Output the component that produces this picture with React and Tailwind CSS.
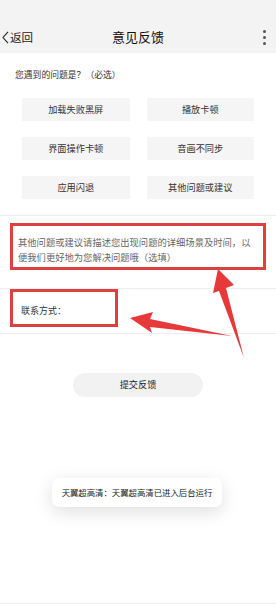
import React from "react";

const font = { fontFamily: '"Noto Sans CJK SC", "Noto Sans", sans-serif' };

export default function App() {
  const items = ["加载失败黑屏", "播放卡顿", "界面操作卡顿", "音画不同步", "应用闪退", "其他问题或建议"];
  return (
    <div className="relative w-[276px] h-[604px] bg-white overflow-hidden flex flex-col" style={font}>
      {/* header */}
      <div className="h-[53px] bg-[#f3f3f3] pt-[20px] shrink-0">
        <div className="h-[34px] grid grid-cols-[1fr_auto_1fr] items-center">
          <div className="flex items-center pl-[2px]">
            <svg width="7" height="13" viewBox="0 0 7 13" className="mr-[1px]">
              <polyline points="6,0.8 1,6.5 6,12.2" fill="none" stroke="#222" strokeWidth="1.1" />
            </svg>
            <span className="text-[11.5px] leading-[14px] text-[#222]">返回</span>
          </div>
          <div className="text-[13px] leading-[16px] text-[#111]">意见反馈</div>
          <div className="flex justify-end pr-[10px]">
            <div className="flex flex-col gap-[3px]">
              <span className="block w-[3px] h-[3px] rounded-full bg-[#555]" />
              <span className="block w-[3px] h-[3px] rounded-full bg-[#555]" />
              <span className="block w-[3px] h-[3px] rounded-full bg-[#555]" />
            </div>
          </div>
        </div>
      </div>

      {/* question */}
      <div className="pt-[15px] pl-[15px] text-[8.8px] leading-[14px] text-[#333]">您遇到的问题是？（必选）</div>
      <div className="mt-[16px] ml-[22px] w-[232px] grid grid-cols-2 gap-x-[17px] gap-y-[16px]">
        {items.map((t) => (
          <div key={t} className="h-[23px] bg-[#f5f5f5] flex items-center justify-center text-[9.2px] text-[#333]">
            {t}
          </div>
        ))}
      </div>

      <div className="mt-[16px] border-t border-[#eeeeee]" />

      {/* description */}
      <div className="pt-[7px] px-[10px]">
        <div className="border-[3px] border-[#dc4040] pt-[9px] pb-[2px] pl-[5px] pr-[6px] text-[9.3px] leading-[15px] text-[#666]">
          其他问题或建议请描述您出现问题的详细场景及时间，以便我们更好地为您解决问题哦（选填）
        </div>
      </div>

      <div className="mt-[18px] border-t border-[#eeeeee]" />

      {/* contact */}
      <div className="pl-[10px]">
        <div className="w-[108px] h-[38px] border-[3px] border-[#dc4040] pt-[12px] pl-[8px] text-[9px] leading-[14px] text-[#333]">
          联系方式：
        </div>
      </div>
      <div className="mt-[6px] border-t border-[#eeeeee]" />

      {/* submit */}
      <div className="mt-[39px] mx-auto w-[130px] h-[24px] rounded-full bg-[#f2f2f2] flex items-center justify-center text-[9.2px] text-[#222]">
        提交反馈
      </div>

      <div className="flex-1" />
      <div className="border-t border-[#eeeeee]" />

      {/* toast */}
      <div className="absolute top-[478px] left-[52px] w-[170px] h-[29px] rounded-[7px] bg-white shadow-[0_5px_18px_rgba(0,0,0,0.13)] flex items-center justify-center text-[8.4px] text-[#222] whitespace-nowrap">
        天翼超高清：天翼超高清已进入后台运行
      </div>

      {/* arrows */}
      <svg className="absolute left-0 top-0 pointer-events-none" width="276" height="604" viewBox="0 0 276 604">
        <polygon points="218,269 234,285 226,288 244,358 219,291 213,293" fill="#e8393a" />
        <polygon points="130,318 153,312 150,319 232,336 150,327 152,333" fill="#e8393a" />
      </svg>
    </div>
  );
}
